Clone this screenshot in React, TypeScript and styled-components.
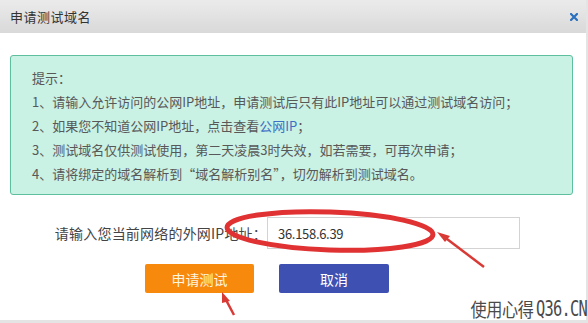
import React from "react";
import styled, { createGlobalStyle } from "styled-components";

const Global = createGlobalStyle`
  html, body { margin: 0; padding: 0; background: #e4e4e4; }
  body { font-family: "Noto Sans CJK SC", "Noto Sans", sans-serif; }
  * { box-sizing: border-box; }
`;

const Page = styled.div`
  position: relative;
  width: 588px;
  height: 323px;
  overflow: hidden;
  background: #e4e4e4;
`;

const Dialog = styled.div`
  width: 586px;
  height: 320px;
  background: #fff;
  display: flex;
  flex-direction: column;
`;

const Header = styled.div`
  height: 33px;
  flex: none;
  display: flex;
  align-items: center;
  justify-content: space-between;
  padding: 0 8px 0 10px;
  background: linear-gradient(#ebebeb, #d9d9d9);
`;

const Title = styled.div`
  font-size: 13px;
  color: #333;
  letter-spacing: 0.5px;
`;

const Close = styled.svg`
  width: 8px;
  height: 8px;
  display: block;
`;

const Body = styled.div`
  padding: 22px 13px 0 10px;
  display: flex;
  flex-direction: column;
`;

const Notice = styled.div`
  background: #c9f1e4;
  border: 1px solid #5dbf9e;
  border-radius: 3px;
  padding: 10px 20px 8px 21px;
  height: 140px;
  color: #585858;
  font-size: 13px;
  line-height: 24px;
  letter-spacing: 0;
`;

const Line = styled.div`
  white-space: nowrap;
`;

const Link = styled.span`
  color: #3d6fc4;
`;

const FormRow = styled.div`
  margin-top: 22px;
  display: grid;
  grid-template-columns: 257px 253px;
  align-items: center;
`;

const Label = styled.label`
  text-align: right;
  font-size: 14px;
  color: #444;
  letter-spacing: 0.2px;
  white-space: nowrap;
`;

const Input = styled.div`
  height: 32px;
  border: 1px solid #d3d3d3;
  display: flex;
  align-items: center;
  padding-left: 10px;
  font-size: 13px;
  color: #333;
  letter-spacing: -0.3px;
`;

const Buttons = styled.div`
  margin-top: 15px;
  padding-left: 135px;
  display: flex;
  gap: 25px;
`;

const Button = styled.div<{ $tone: "orange" | "blue" }>`
  width: ${(p) => (p.$tone === "orange" ? 109 : 110)}px;
  height: 29px;
  border-radius: 2px;
  display: flex;
  align-items: center;
  justify-content: center;
  font-size: 14px;
  color: ${(p) => (p.$tone === "orange" ? "#fff6e0" : "#fff")};
  background: ${(p) => (p.$tone === "orange" ? "#f7890c" : "#3e50b2")};
`;

const Overlay = styled.svg`
  position: absolute;
  left: 0;
  top: 0;
  width: 588px;
  height: 323px;
  pointer-events: none;
`;

const Watermark = styled.div`
  position: absolute;
  right: 1px;
  bottom: 3px;
  font-size: 19px;
  line-height: 22px;
  color: #4a4a4a;
  letter-spacing: -0.5px;
  white-space: nowrap;
  display: flex;
  align-items: center;
  transform: scaleX(0.85);
  transform-origin: right center;
`;

const Mark = styled.span`
  display: inline-block;
  width: 60px;
  margin-left: 3px;
  font-family: "DejaVu Sans Mono", monospace;
  font-size: 21px;
  letter-spacing: -1px;
  transform: scaleX(0.86);
  transform-origin: left center;
`;

export default function App() {
  return (
    <Page>
      <Global />
      <Dialog>
        <Header>
          <Title>申请测试域名</Title>
          <Close viewBox="0 0 8 8">
            <path d="M1 1 L7 7 M7 1 L1 7" stroke="#2b6fbf" strokeWidth="2.2" strokeLinecap="square" />
          </Close>
        </Header>
        <Body>
          <Notice>
            <Line>提示：</Line>
            <Line>1、请输入允许访问的公网IP地址，申请测试后只有此IP地址可以通过测试域名访问；</Line>
            <Line>
              2、如果您不知道公网IP地址，点击查看<Link>公网IP</Link>；
            </Line>
            <Line>3、测试域名仅供测试使用，第二天凌晨3时失效，如若需要，可再次申请；</Line>
            <Line>4、请将绑定的域名解析到“域名解析别名”，切勿解析到测试域名。</Line>
          </Notice>
          <FormRow>
            <Label>请输入您当前网络的外网IP地址：</Label>
            <Input>36.158.6.39</Input>
          </FormRow>
          <Buttons>
            <Button $tone="orange">申请测试</Button>
            <Button $tone="blue">取消</Button>
          </Buttons>
        </Body>
      </Dialog>
      <Overlay viewBox="0 0 588 323">
        <ellipse cx="330" cy="231" rx="103" ry="19" fill="none" stroke="#e03232" strokeWidth="5" transform="rotate(2 330 231)" />
        <path d="M484 267 L443 236" stroke="#d83a36" strokeWidth="2.5" />
        <path d="M437 232 L450 236 L445 242 Z" fill="#d83a36" />
        <path d="M234 315 L225 298" stroke="#d83a36" strokeWidth="2.5" />
        <path d="M222 292 L230 301 L222 303 Z" fill="#d83a36" />
      </Overlay>
      <Watermark>
        使用心得<Mark>Q36.CN</Mark>
      </Watermark>
    </Page>
  );
}
